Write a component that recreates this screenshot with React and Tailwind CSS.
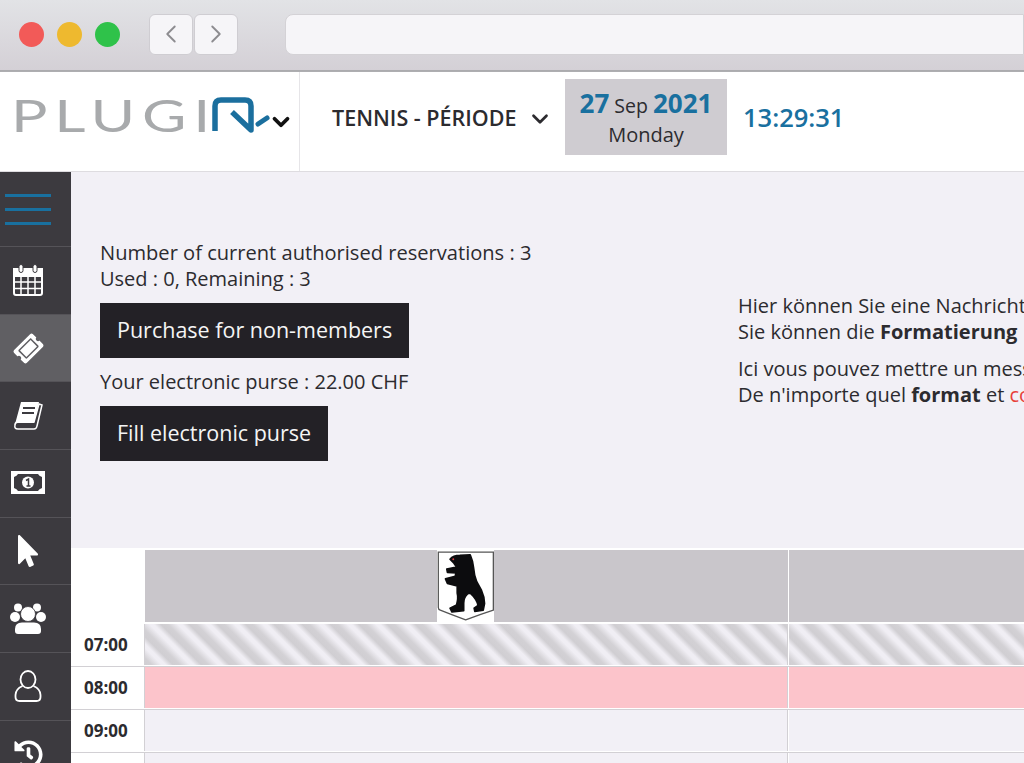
import React from 'react';
import { FaHistory, FaMousePointer, FaTicketAlt } from 'react-icons/fa';
import { ChevronDown, ChevronLeft, ChevronRight } from 'lucide-react';

const CalendarIcon = () => (
  <svg width="32" height="34" viewBox="0 0 32 34" fill="none" stroke="white">
    <rect x="2" y="6" width="28" height="26" rx="2" strokeWidth="2" />
    <rect x="2" y="6" width="28" height="7" fill="white" strokeWidth="2" />
    <path d="M2 19h28M2 25.500h28M9 13v19M16 13v19M23 13v19" strokeWidth="1.500" />
    <rect x="7" y="1.500" width="4" height="8" rx="2" fill="white" stroke="#3c3a3f" strokeWidth="1" />
    <rect x="21" y="1.500" width="4" height="8" rx="2" fill="white" stroke="#3c3a3f" strokeWidth="1" />
  </svg>
);

const BookIcon = () => (
  <svg width="30" height="29" viewBox="0 0 30 29">
    <path d="M8 1 H26 L21 22 H5 Q2 22 1.500 25 Z" fill="white" />
    <path d="M2 24 Q2 21 5 21 H21 L26 3 L29 4 L24 25 Q23.500 28 21 28 H5 Q1 28 2 24 Z" fill="none" stroke="white" strokeWidth="1.500" />
    <path d="M10 7 H22 M9 12 H21" stroke="#3c3a3f" strokeWidth="2" />
  </svg>
);

const MoneyIcon = () => (
  <svg width="34" height="24" viewBox="0 0 34 24">
    <rect width="34" height="23" fill="white" />
    <path d="M3 6 Q6 5 7 3 H27 Q28 5 31 6 V17 Q28 18 27 20 H7 Q6 18 3 17 Z" fill="#3c3a3f" />
    <circle cx="17" cy="11.500" r="6" fill="white" />
    <path d="M15 9.500 L17.500 8 V15 M15.500 15 H19.500" fill="none" stroke="#3c3a3f" strokeWidth="1.500" />
  </svg>
);

const UsersIcon = () => (
  <svg width="36" height="32" viewBox="0 0 36 32" fill="white">
    <circle cx="8" cy="4.500" r="4" />
    <circle cx="27" cy="4.500" r="4" />
    <circle cx="5" cy="14" r="5" />
    <circle cx="31" cy="14" r="5" />
    <circle cx="18" cy="11" r="7.500" stroke="#3c3a3f" strokeWidth="0.800" />
    <path d="M5 28 V26 Q5 19.500 12 19.500 H24 Q31 19.500 31 26 V28 Q31 31 28 31 H8 Q5 31 5 28 Z" />
  </svg>
);

const UserIcon = () => (
  <svg width="28" height="33" viewBox="0 0 28 33" fill="none" stroke="white" strokeWidth="1.800">
    <ellipse cx="14" cy="9.500" rx="7.500" ry="8.500" />
    <path d="M8.500 16 C4 18 1.500 20.500 1.500 25 V27 C1.500 29.500 3 31 5.500 31 H22.500 C25 31 26.500 29.500 26.500 27 V25 C26.500 20.500 24 18 19.500 16" />
  </svg>
);

const sideItems = [
  { icon: <CalendarIcon /> },
  { icon: <FaTicketAlt className="text-white -rotate-45" size={27} />, active: true },
  { icon: <BookIcon /> },
  { icon: <MoneyIcon /> },
  { icon: <FaMousePointer className="text-white" size={32} /> },
  { icon: <UsersIcon /> },
  { icon: <UserIcon /> },
  { icon: <FaHistory className="text-white" size={29} /> },
];

const Logo = () => (
  <div className="flex items-center w-[300px] h-full border-r border-[#e6e5e8] pl-[11px] pb-[12px]">
    <span className="font-['Lato',sans-serif] font-normal text-[45px] leading-none tracking-[5px] text-[#a8aaac] w-[201px] origin-left scale-x-[1.350]">PLUGI</span>
    <svg width="58" height="38" viewBox="0 0 58 38" fill="none" className="shrink-0 -mt-[1px]">
      <path d="M3 35 V10 Q3 4 9 4 H33 Q39 4 39 10 V34 L20 16" stroke="#1b6f9e" strokeWidth="5.500" strokeLinejoin="round" />
      <path d="M46 28 L55 22" stroke="#1b6f9e" strokeWidth="5" strokeLinecap="round" />
    </svg>
    <ChevronDown size={26} strokeWidth={3.500} className="shrink-0 text-[#111] -ml-[2px] mt-[12px]" />
  </div>
);

const Bear = () => (
  <div className="absolute left-[292px] top-0 h-full w-[57px] bg-white">
    <svg width="57" height="72" viewBox="110 30 175 216">
      <path d="M114 34 H283 V212 Q240 226 198 242 Q155 226 120 212 Q114 210 114 204 Z" fill="white" stroke="#555" strokeWidth="4" />
      <path
        d="M150 56 Q160 44 180 44 L212 42 Q220 60 222 80 Q224 105 232 125 L246 150 Q256 172 256 192 L252 212 L226 216 L224 206 L236 198 Q232 178 212 160 L204 162 Q192 172 192 190 L192 214 L156 218 L150 206 L170 196 Q176 176 172 160 L172 138 L142 130 L136 116 L166 108 L168 98 L142 96 L140 86 L170 80 L162 68 Z"
        fill="#0c0c0e"
        stroke="#0c0c0e"
        strokeWidth="5"
        strokeLinejoin="round"
      />
      <circle cx="160" cy="56" r="3" fill="#d8404a" />
    </svg>
  </div>
);

const rows = [
  { time: '07:00', cell: 'h-[41px] bg-[repeating-linear-gradient(45deg,#d0ced2_0,#d3d1d5_5px,#f0eef4_12px,#f0eef4_15px,#d0ced2_20px)]' },
  { time: '08:00', cell: 'h-[41px] bg-[#fcc4cb]' },
  { time: '09:00', cell: 'h-[41px] bg-[#f2f0f6]' },
  { time: '10:00', cell: 'h-[41px] bg-[#f2f0f6]' },
];

export default function App() {
  return (
    <div className="w-[1024px] h-[763px] overflow-hidden flex flex-col bg-white font-['Open_Sans',sans-serif] text-[#2c2b2f]">
      {/* browser chrome */}
      <div className="h-[72px] shrink-0 flex items-center pb-[2px] bg-gradient-to-b from-[#e2e3e6] to-[#d4d0d6] border-b-2 border-[#ababae]">
        <div className="flex gap-[13px] ml-[19px]">
          <span className="w-[25px] h-[25px] rounded-full bg-[#f25a58]" />
          <span className="w-[25px] h-[25px] rounded-full bg-[#eeb92f]" />
          <span className="w-[25px] h-[25px] rounded-full bg-[#2fc24a]" />
        </div>
        <div className="flex gap-[1px] ml-[29px]">
          <div className="w-[44px] h-[41px] flex items-center justify-center rounded-[6px] bg-[#f6f5f8] border border-[#cfcdd2]">
            <ChevronLeft size={30} strokeWidth={1.500} className="text-[#8d8c90]" />
          </div>
          <div className="w-[44px] h-[41px] flex items-center justify-center rounded-[6px] bg-[#f6f5f8] border border-[#cfcdd2]">
            <ChevronRight size={30} strokeWidth={1.500} className="text-[#8d8c90]" />
          </div>
        </div>
        <div className="flex-1 h-[41px] ml-[47px] rounded-l-[8px] bg-[#f6f5f8] border border-[#d4d2d6]" />
      </div>

      {/* app header */}
      <div className="h-[100px] shrink-0 flex items-center border-b border-[#dedce0] shadow-[0_1px_2px_#dedce0]">
        <Logo />
        <div className="flex items-center ml-[32px] -mt-[6px]">
          <span className="text-[21.500px] font-semibold w-[195px] whitespace-nowrap">TENNIS - PÉRIODE</span>
          <ChevronDown size={26} strokeWidth={2.500} />
        </div>
        <div className="w-[162px] h-[76px] ml-[12px] -mt-[9px] pt-[2px] bg-[#cfccd1] flex flex-col items-center justify-center">
          <div className="leading-[30px] whitespace-nowrap text-[19.500px]">
            <span className="text-[26px] font-bold text-[#19709f]">27</span> Sep <span className="text-[26px] font-bold text-[#19709f]">2021</span>
          </div>
          <div className="text-[20px] leading-[28px]">Monday</div>
        </div>
        <span className="ml-[16px] -mt-[8px] text-[25.500px] font-semibold text-[#19709f]">13:29:31</span>
      </div>

      <div className="flex flex-1 min-h-0">
        {/* sidebar */}
        <div className="w-[71px] shrink-0 bg-[#3c3a3f] flex flex-col">
          <div className="h-[75px] shrink-0 flex flex-col justify-center gap-[11px] px-[5px] border-b border-[#555358]">
            <span className="h-[3px] w-[46px] bg-[#19709f]" />
            <span className="h-[3px] w-[46px] bg-[#19709f]" />
            <span className="h-[3px] w-[46px] bg-[#19709f]" />
          </div>
          {sideItems.map((item, i) => (
            <div
              key={i}
              className={`h-[67.700px] shrink-0 flex items-center justify-center pr-[15px] border-b border-[#555358] ${item.active ? 'bg-[#605f63]' : ''}`}
            >
              {item.icon}
            </div>
          ))}
        </div>

        <div className="flex-1 min-w-0 flex flex-col">
          {/* message panel */}
          <div className="h-[376px] shrink-0 bg-[#f2f0f6] flex text-[20px] leading-[26px]">
            <div className="w-[667px] shrink-0 pl-[29px] pt-[68px]">
              <p className="text-[20.100px]">Number of current authorised reservations : 3</p>
              <p>Used : 0, Remaining : 3</p>
              <button className="block mt-[11px] h-[55px] px-[17px] pb-[2px] bg-[#232126] text-[#f5f5f5] text-[21.500px]">Purchase for non-members</button>
              <p className="mt-[11px]">Your electronic purse : 22.00 CHF</p>
              <button className="block mt-[11px] h-[55px] px-[17px] pb-[2px] bg-[#232126] text-[#f5f5f5] text-[21.500px]">Fill electronic purse</button>
            </div>
            <div className="flex-1 min-w-0 pt-[121px] overflow-hidden whitespace-nowrap">
              <p>Hier können Sie eine Nachricht</p>
              <p>Sie können die <b>Formatierung</b></p>
              <p className="mt-[11px]">Ici vous pouvez mettre un message</p>
              <p>De n'importe quel <b>format</b> et <span className="text-[#e8403a]">couleur</span></p>
            </div>
          </div>

          {/* planning grid */}
          <div className="flex-1 min-h-0 overflow-hidden pt-[2px]">
            <div className="flex h-[72px]">
              <div className="w-[74px] shrink-0" />
              <div className="w-[643px] shrink-0 bg-[#c9c6cb] relative"><Bear /></div>
              <div className="flex-1 ml-[1px] bg-[#c9c6cb]" />
            </div>
            <div className="mt-[2px] flex flex-col">
              {rows.map((r) => (
                <div key={r.time} className="flex h-[43px] pb-[1px] border-b border-[#d2d0d4]">
                  <div className="w-[74px] shrink-0 text-[17px] font-bold pl-[13px] leading-[41px] border-r border-[#d2d0d4]">{r.time}</div>
                  <div className={`w-[643px] shrink-0 border-r border-[#d2d0d4] ${r.cell}`} />
                  <div className={`flex-1 ml-[1px] ${r.cell}`} />
                </div>
              ))}
            </div>
          </div>
        </div>
      </div>
    </div>
  );
}
